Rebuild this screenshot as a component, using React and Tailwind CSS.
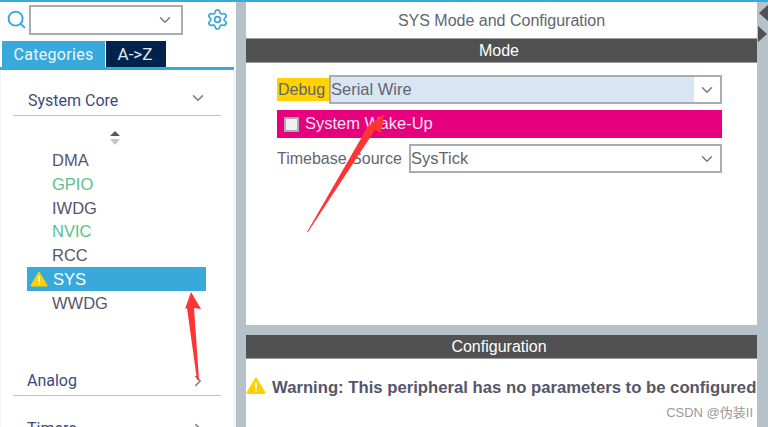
import { ChevronDown, ChevronRight, Search, Settings } from 'lucide-react';

const peripherals = [
  { name: 'DMA', color: 'text-[#55566a]' },
  { name: 'GPIO', color: 'text-[#5cbf8c]' },
  { name: 'IWDG', color: 'text-[#55566a]' },
  { name: 'NVIC', color: 'text-[#5cbf8c]' },
  { name: 'RCC', color: 'text-[#55566a]' },
];

function WarningIcon({ className }) {
  return (
    <svg viewBox="0 0 20 18" className={className}>
      <path d="M10 1 L19 16 Q19.500 17 18.500 17 L1.500 17 Q0.500 17 1 16 Z" fill="#ffcf00" stroke="#ffcf00" strokeLinejoin="round" />
      <rect x="9.200" y="6" width="1.600" height="6" fill="#fff" />
      <rect x="9.200" y="13" width="1.600" height="1.800" fill="#fff" />
    </svg>
  );
}

function Sidebar() {
  return (
    <aside className="w-[236px] shrink-0 bg-white flex flex-col font-['Roboto',sans-serif]">
      <div className="h-[39px] flex items-start pt-[3px]">
        <Search size={21} strokeWidth={2.2} className="ml-[6px] mt-[4px] text-[#39a9dc]" />
        <div className="ml-[2px] w-[154px] h-[30px] border-2 border-[#a9adb2] flex items-center justify-end pr-[7px]">
          <ChevronDown size={18} className="text-[#77797f]" />
        </div>
        <Settings size={23} strokeWidth={1.8} className="ml-[23px] mt-[3px] text-[#39a9dc]" />
      </div>
      <div className="h-[26px] flex pl-[2px] gap-px">
        <div className="w-[103px] bg-[#39a9dc] text-[#eef8fd] text-[16px] tracking-[0.3px] flex items-center justify-center pt-[2px]">Categories</div>
        <div className="w-[60px] bg-[#00234b] text-[#e4e8ee] text-[17px] flex items-center justify-center pt-[2px] pr-[2px]">A-&gt;Z</div>
      </div>
      <div className="h-[3px] w-[234px] bg-[#39a9dc]" />
      <div className="flex-1 bg-[#f3f4f5] pl-px pr-[3px] min-h-0">
        <div className="h-full bg-white overflow-hidden">
          <div className="mx-[12px] h-[46px] border-b border-[#b6c2c9] flex items-end justify-between pb-[2px] pl-[15px] pr-[14px]">
            <span className="text-[16px] leading-[24px] text-[#3c4a80]">System Core</span>
            <ChevronDown size={18} className="mb-[6px] text-[#77797f]" />
          </div>
          <div className="flex flex-col items-center w-[228px] mt-[15px] gap-[3px]">
            <div className="w-0 h-0 border-x-[5px] border-x-transparent border-b-[5px] border-b-[#55566a]" />
            <div className="w-0 h-0 border-x-[5px] border-x-transparent border-t-[6px] border-t-[#c4c6ca]" />
          </div>
          <ul className="mt-[4px] font-['Liberation_Sans',sans-serif] text-[16.500px]">
            {peripherals.map((p) => (
              <li key={p.name} className={`h-[23.600px] flex items-center pl-[51px] ${p.color}`}>{p.name}</li>
            ))}
            <li className="ml-[26px] w-[179px] h-[24px] bg-[#39a9dc] text-white flex items-center">
              <WarningIcon className="ml-[3px] w-[18px] h-[16px]" />
              <span className="ml-[5px]">SYS</span>
            </li>
            <li className="h-[25px] flex items-center pl-[51px] text-[#55566a]">WWDG</li>
          </ul>
          <div className="mx-[12px] mt-[50px] h-[30px] border-b border-[#b6c2c9] flex items-center justify-between pt-[2px] pl-[14px] pr-[14px] text-[16px] text-[#3c4a80]">
            <span>Analog</span>
            <ChevronRight size={18} className="text-[#77797f]" />
          </div>
          <div className="mx-[12px] h-[42px] flex items-center justify-between pt-[24px] pl-[14px] pr-[14px] text-[16px] text-[#3c4a80]">
            <span>Timers</span>
            <ChevronRight size={18} className="text-[#77797f]" />
          </div>
        </div>
      </div>
    </aside>
  );
}

function SelectBox({ value, className, fieldClass }) {
  return (
    <div className={`border-2 border-[#a9adb2] flex ${className}`}>
      <div className={`flex-1 flex items-center text-[16.500px] ${fieldClass}`}>{value}</div>
      <div className="w-[26px] bg-white flex items-center justify-center">
        <ChevronDown size={18} className="text-[#77797f]" />
      </div>
    </div>
  );
}

function MainPanel() {
  return (
    <main className="w-[511px] shrink-0 flex flex-col font-['Liberation_Sans',sans-serif] text-[#63646f]">
      <section className="h-[323px] bg-white">
        <h1 className="h-[36px] flex items-center justify-center pt-[2px] text-[16px] font-normal">SYS Mode and Configuration</h1>
        <div className="h-[25px] bg-[#505150] border-y border-[#9a9c9c] flex items-center justify-center pr-[5px] text-white text-[16px]">Mode</div>
        <div className="pl-[31px] pr-[35px] pt-[12px] text-[16px]">
          <div className="flex items-center h-[29px]">
            <span className="w-[52px] h-[23px] bg-[#ffd200] flex items-center pl-px">Debug</span>
            <SelectBox value="Serial Wire" className="flex-1 h-[29px]" fieldClass="bg-[#d8e6f3]" />
          </div>
          <div className="mt-[6px] h-[28px] bg-[#e6007e] text-[#fbe3f0] flex items-center pl-[7px]">
            <span className="w-[15px] h-[15px] bg-[#eef0f2] border-2 border-[#a9adb2]" />
            <span className="ml-[6px] mb-px text-[16.500px]">System Wake-Up</span>
          </div>
          <div className="mt-[6px] flex items-center h-[29px]">
            <span className="w-[132px] whitespace-nowrap">Timebase Source</span>
            <SelectBox value="SysTick" className="flex-1 h-[29px]" fieldClass="bg-white" />
          </div>
        </div>
      </section>
      <div className="h-[10px]" />
      <section className="flex-1 bg-white relative">
        <div className="h-[24px] bg-[#505150] border-b border-[#9a9c9c] flex items-center justify-center pr-[5px] text-white text-[16px]">Configuration</div>
        <div className="mt-[16px] flex items-center whitespace-nowrap">
          <WarningIcon className="w-[20px] h-[19px] shrink-0 mb-[4px]" />
          <span className="ml-[6px] font-bold text-[16.700px] text-[#55566a]">Warning: This peripheral has no parameters to be configured</span>
        </div>
        <span className="absolute right-[4px] top-[68px] text-[13px] text-[#9a9a9a] font-['Liberation_Sans','Noto_Sans_CJK_SC',sans-serif]">CSDN @伪装II</span>
      </section>
    </main>
  );
}

export default function App() {
  return (
    <div className="relative w-[768px] h-[427px] overflow-hidden bg-[#b6c2c9] flex flex-col">
      <div className="h-[2px] bg-[#39a9dc] shrink-0" />
      <div className="flex-1 flex min-h-0">
        <Sidebar />
        <div className="w-[10px] shrink-0" />
        <MainPanel />
        <div className="flex-1 flex flex-col items-end pt-[3px] gap-[5px]">
          <div className="w-0 h-0 border-y-[8px] border-y-transparent border-r-[9px] border-r-[#505150]" />
          <div className="w-0 h-0 border-y-[8px] border-y-transparent border-l-[9px] border-l-[#505150] mr-px" />
        </div>
      </div>
      {/* red annotation arrows pasted over the screenshot */}
      <svg className="absolute inset-0 pointer-events-none" width="768" height="427" viewBox="0 0 768 427">
        <polygon points="191,292 201,309 194,308 199,380 197,380 187,308 185,309" fill="#ff3434" />
        <polygon points="307,232 363,135 367,127 384,114 381,133 375,130 308,232" fill="#ff3434" />
      </svg>
    </div>
  );
}
